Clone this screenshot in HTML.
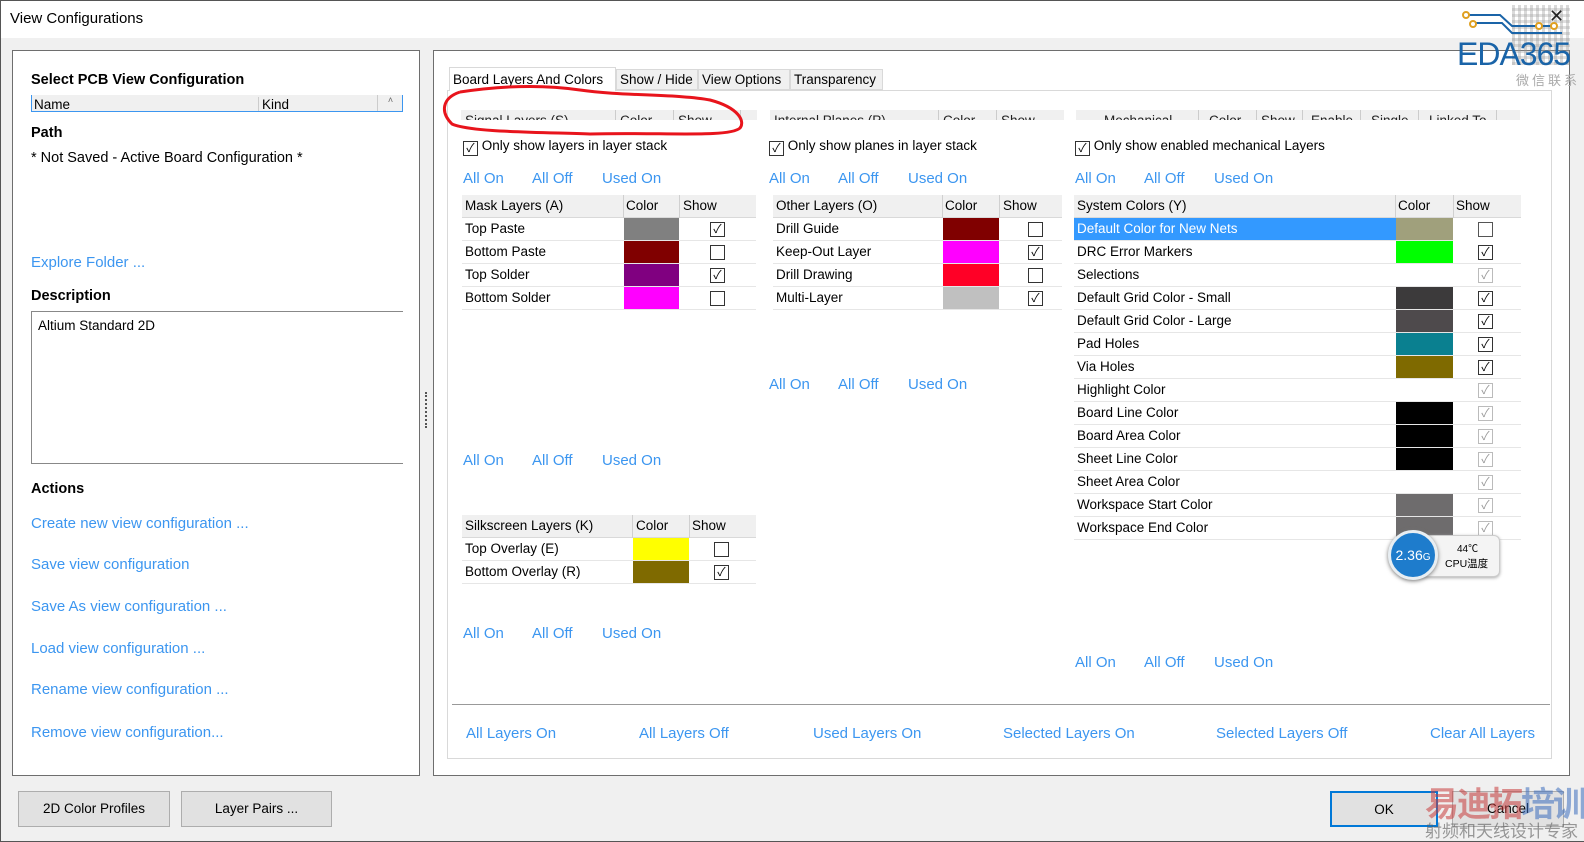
<!DOCTYPE html>
<html><head><meta charset="utf-8"><style>
*{box-sizing:border-box;margin:0;padding:0}
body{width:1584px;height:842px;background:#f0f0f0;font-family:"Liberation Sans","Noto Sans CJK SC",sans-serif;font-size:13.5px;color:#000;position:relative;overflow:hidden}
.a{position:absolute;white-space:nowrap}
.lk{position:absolute;color:#3c96f0;font-size:15px;white-space:nowrap}
.tb{position:absolute}
.tb .r{position:absolute;left:0;right:0;height:23px;border-bottom:1px solid #e6e6e6}
.tb .h{position:absolute;left:0;right:0;top:0;height:23px;background:#f0f0f0;border-bottom:1px solid #d9d9d9}
.tb .t{position:absolute;top:3px;left:3px}
.tb .v{position:absolute;top:0;bottom:0;border-left:1px solid #d0d0d0}
.sw{position:absolute;top:0;height:22px}
.cb{position:absolute;top:4px;width:15px;height:15px;border:1px solid #333;background:#fff;font-size:12px;line-height:13px;text-align:center;color:#000}
.cb.g{border-color:#bbb;color:#999}
.btn{position:absolute;background:#e1e1e1;border:1px solid #adadad;text-align:center;line-height:33px;font-size:13.5px}
</style></head><body>
<div class="a" style="left:0;top:0;width:1584px;height:38px;background:#fff"></div>
<div class="a" style="left:10px;top:10px;font-size:15px">View Configurations</div>
<div class="a" style="left:0;top:0;width:1584px;height:842px;border:1px solid #555;border-right:none"></div>

<!-- left panel -->
<div class="a" style="left:12px;top:50px;width:408px;height:726px;background:#fff;border:1px solid #6e6e6e"></div>
<div class="a" style="left:31px;top:72px;font-weight:bold;font-size:14.5px">Select PCB View Configuration</div>
<div class="a" style="left:31px;top:95px;width:372px;height:17px;background:#f0f0f0;border:1px solid #3c96f0;border-top:none;overflow:hidden"><span class="a" style="left:2px;top:2px">Name</span><span class="a" style="left:226px;top:2px;border-left:1px solid #ccc;padding-left:3px">Kind</span><span class="a" style="left:345px;top:0;border-left:1px solid #ccc;width:26px;height:17px;font-size:9px;text-align:center;color:#666">˄</span></div>
<div class="a" style="left:31px;top:125px;font-weight:bold;font-size:14.5px">Path</div>
<div class="a" style="left:31px;top:150px;font-size:14.5px">* Not Saved - Active Board Configuration *</div>
<div class="lk" style="left:31px;top:254px">Explore Folder ...</div>
<div class="a" style="left:31px;top:288px;font-weight:bold;font-size:14.5px">Description</div>
<div class="a" style="left:31px;top:311px;width:372px;height:153px;border-top:1px solid #888;border-left:1px solid #888;border-bottom:1px solid #888"></div>
<div class="a" style="left:38px;top:318px">Altium Standard 2D</div>
<div class="a" style="left:31px;top:481px;font-weight:bold;font-size:14.5px">Actions</div>
<div class="lk" style="left:31px;top:515px">Create new view configuration ...</div>
<div class="lk" style="left:31px;top:556px">Save view configuration</div>
<div class="lk" style="left:31px;top:598px">Save As view configuration ...</div>
<div class="lk" style="left:31px;top:640px">Load view configuration ...</div>
<div class="lk" style="left:31px;top:681px">Rename view configuration ...</div>
<div class="lk" style="left:31px;top:724px">Remove view configuration...</div>
<div class="a" style="left:425px;top:392px;width:2px;height:36px;border-left:2px dotted #555"></div>

<!-- right panel -->
<div class="a" style="left:433px;top:50px;width:1137px;height:726px;background:#fff;border:1px solid #6e6e6e"></div>
<div class="a" style="left:447px;top:90px;width:1105px;height:669px;border:1px solid #d9d9d9"></div>
<div class="a" style="left:449px;top:67px;width:167px;height:24px;background:#fff;border:1px solid #d9d9d9;border-bottom:none;padding:4px 3px">Board Layers And Colors</div>
<div class="a" style="left:616px;top:69px;width:82px;height:21px;background:#f0f0f0;border:1px solid #d9d9d9;padding:2px 3px">Show / Hide</div>
<div class="a" style="left:698px;top:69px;width:92px;height:21px;background:#f0f0f0;border:1px solid #d9d9d9;padding:2px 3px">View Options</div>
<div class="a" style="left:790px;top:69px;width:93px;height:21px;background:#f0f0f0;border:1px solid #d9d9d9;padding:2px 3px">Transparency</div>

<!-- clipped headers -->
<div class="a" style="left:461px;top:110px;width:296px;height:10px;background:#f0f0f0;overflow:hidden;color:#222"><span class="a" style="left:4px;top:3px">Signal Layers (S)</span><span class="a" style="left:154px;top:0;height:10px;border-left:1px solid #ccc;padding:3px 4px">Color</span><span class="a" style="left:212px;top:0;height:10px;border-left:1px solid #ccc;padding:3px 4px">Show</span><span class="a" style="left:279px;top:0;height:10px;border-left:1px solid #ccc"></span></div>
<div class="a" style="left:770px;top:110px;width:294px;height:10px;background:#f0f0f0;overflow:hidden;color:#222"><span class="a" style="left:4px;top:3px">Internal Planes (P)</span><span class="a" style="left:168px;top:0;height:10px;border-left:1px solid #ccc;padding:3px 4px">Color</span><span class="a" style="left:226px;top:0;height:10px;border-left:1px solid #ccc;padding:3px 4px">Show</span></div>
<div class="a" style="left:1076px;top:110px;width:444px;height:10px;background:#f0f0f0;overflow:hidden;color:#222"><span class="a" style="left:28px;top:3px">Mechanical</span><span class="a" style="left:122px;top:0;height:10px;border-left:1px solid #ccc;padding:3px 10px">Color</span><span class="a" style="left:180px;top:0;height:10px;border-left:1px solid #ccc;padding:3px 4px">Show</span><span class="a" style="left:226px;top:0;height:10px;border-left:1px solid #ccc;padding:3px 8px">Enable</span><span class="a" style="left:284px;top:0;height:10px;border-left:1px solid #ccc;padding:3px 10px">Single</span><span class="a" style="left:342px;top:0;height:10px;border-left:1px solid #ccc;padding:3px 10px">Linked To</span><span class="a" style="left:420px;top:0;height:10px;border-left:1px solid #ccc"></span></div>

<!-- red ellipse annotation -->
<svg class="a" style="left:440px;top:82px" width="320" height="60"><path d="M20 10 C60 4 100 2 140 8 C180 14 240 12 270 18 C300 26 305 40 300 46 C290 56 220 50 150 52 C90 50 30 50 12 42 C0 30 2 16 20 10" fill="none" stroke="#e8141c" stroke-width="3"/></svg>

<!-- checkboxes -->
<div class="a" style="left:463px;top:138px"><span class="cb" style="position:relative;display:inline-block;top:2px;left:0">✓</span> Only show layers in layer stack</div>
<div class="a" style="left:769px;top:138px"><span class="cb" style="position:relative;display:inline-block;top:2px;left:0">✓</span> Only show planes in layer stack</div>
<div class="a" style="left:1075px;top:138px"><span class="cb" style="position:relative;display:inline-block;top:2px;left:0">✓</span> Only show enabled mechanical Layers</div>

<div class="lk" style="left:463px;top:170px">All On</div><div class="lk" style="left:532px;top:170px">All Off</div><div class="lk" style="left:602px;top:170px">Used On</div>
<div class="lk" style="left:769px;top:170px">All On</div><div class="lk" style="left:838px;top:170px">All Off</div><div class="lk" style="left:908px;top:170px">Used On</div>
<div class="lk" style="left:1075px;top:170px">All On</div><div class="lk" style="left:1144px;top:170px">All Off</div><div class="lk" style="left:1214px;top:170px">Used On</div>

<!-- Mask table -->
<div class="tb" style="left:462px;top:195px;width:294px;height:115px">
<div class="h"><span class="t">Mask Layers (A)</span><span class="t" style="left:164px">Color</span><span class="t" style="left:221px">Show</span></div>
<div class="v" style="left:161px;height:23px"></div><div class="v" style="left:217px;height:23px"></div>
<div class="r" style="top:23px"><span class="t">Top Paste</span><div class="sw" style="left:162px;width:55px;background:#808080"></div><div class="cb" style="left:248px">✓</div></div>
<div class="r" style="top:46px"><span class="t">Bottom Paste</span><div class="sw" style="left:162px;width:55px;background:#800000"></div><div class="cb" style="left:248px"></div></div>
<div class="r" style="top:69px"><span class="t">Top Solder</span><div class="sw" style="left:162px;width:55px;background:#800080"></div><div class="cb" style="left:248px">✓</div></div>
<div class="r" style="top:92px"><span class="t">Bottom Solder</span><div class="sw" style="left:162px;width:55px;background:#ff00ff"></div><div class="cb" style="left:248px"></div></div>
</div>

<!-- Other table -->
<div class="tb" style="left:773px;top:195px;width:289px;height:115px">
<div class="h"><span class="t">Other Layers (O)</span><span class="t" style="left:172px">Color</span><span class="t" style="left:230px">Show</span></div>
<div class="v" style="left:169px;height:23px"></div><div class="v" style="left:226px;height:23px"></div>
<div class="r" style="top:23px"><span class="t">Drill Guide</span><div class="sw" style="left:170px;width:56px;background:#800000"></div><div class="cb" style="left:255px"></div></div>
<div class="r" style="top:46px"><span class="t">Keep-Out Layer</span><div class="sw" style="left:170px;width:56px;background:#ff00ff"></div><div class="cb" style="left:255px">✓</div></div>
<div class="r" style="top:69px"><span class="t">Drill Drawing</span><div class="sw" style="left:170px;width:56px;background:#ff0026"></div><div class="cb" style="left:255px"></div></div>
<div class="r" style="top:92px"><span class="t">Multi-Layer</span><div class="sw" style="left:170px;width:56px;background:#c0c0c0"></div><div class="cb" style="left:255px">✓</div></div>
</div>

<!-- System table -->
<div class="tb" style="left:1074px;top:195px;width:447px;height:345px">
<div class="h"><span class="t">System Colors (Y)</span><span class="t" style="left:324px">Color</span><span class="t" style="left:382px">Show</span></div>
<div class="v" style="left:321px;height:23px"></div><div class="v" style="left:379px;height:23px"></div>
<div class="r" style="top:23px;background:#3399ff;color:#fff"><span class="t">Default Color for New Nets</span><div class="sw" style="left:322px;width:57px;background:#a0a07c"></div><div class="a" style="left:379px;top:0;width:68px;height:23px;background:#fff"></div><div class="cb" style="left:404px;border-color:#555"></div></div>
<div class="r" style="top:46px"><span class="t">DRC Error Markers</span><div class="sw" style="left:322px;width:57px;background:#00ff00"></div><div class="cb" style="left:404px">✓</div></div>
<div class="r" style="top:69px"><span class="t">Selections</span><div class="cb g" style="left:404px">✓</div></div>
<div class="r" style="top:92px"><span class="t">Default Grid Color - Small</span><div class="sw" style="left:322px;width:57px;background:#3c3a3b"></div><div class="cb" style="left:404px">✓</div></div>
<div class="r" style="top:115px"><span class="t">Default Grid Color - Large</span><div class="sw" style="left:322px;width:57px;background:#4e4a4c"></div><div class="cb" style="left:404px">✓</div></div>
<div class="r" style="top:138px"><span class="t">Pad Holes</span><div class="sw" style="left:322px;width:57px;background:#0a8090"></div><div class="cb" style="left:404px">✓</div></div>
<div class="r" style="top:161px"><span class="t">Via Holes</span><div class="sw" style="left:322px;width:57px;background:#7f6a00"></div><div class="cb" style="left:404px">✓</div></div>
<div class="r" style="top:184px"><span class="t">Highlight Color</span><div class="cb g" style="left:404px">✓</div></div>
<div class="r" style="top:207px"><span class="t">Board Line Color</span><div class="sw" style="left:322px;width:57px;background:#000"></div><div class="cb g" style="left:404px">✓</div></div>
<div class="r" style="top:230px"><span class="t">Board Area Color</span><div class="sw" style="left:322px;width:57px;background:#000"></div><div class="cb g" style="left:404px">✓</div></div>
<div class="r" style="top:253px"><span class="t">Sheet Line Color</span><div class="sw" style="left:322px;width:57px;background:#000"></div><div class="cb g" style="left:404px">✓</div></div>
<div class="r" style="top:276px"><span class="t">Sheet Area Color</span><div class="cb g" style="left:404px">✓</div></div>
<div class="r" style="top:299px"><span class="t">Workspace Start Color</span><div class="sw" style="left:322px;width:57px;background:#6e6c6d"></div><div class="cb g" style="left:404px">✓</div></div>
<div class="r" style="top:322px"><span class="t">Workspace End Color</span><div class="sw" style="left:322px;width:57px;background:#6e6c6d"></div><div class="cb g" style="left:404px">✓</div></div>
</div>

<div class="lk" style="left:769px;top:376px">All On</div><div class="lk" style="left:838px;top:376px">All Off</div><div class="lk" style="left:908px;top:376px">Used On</div>
<div class="lk" style="left:463px;top:452px">All On</div><div class="lk" style="left:532px;top:452px">All Off</div><div class="lk" style="left:602px;top:452px">Used On</div>

<!-- Silkscreen -->
<div class="tb" style="left:462px;top:515px;width:294px;height:69px">
<div class="h"><span class="t">Silkscreen Layers (K)</span><span class="t" style="left:174px">Color</span><span class="t" style="left:230px">Show</span></div>
<div class="v" style="left:170px;height:23px"></div><div class="v" style="left:227px;height:23px"></div>
<div class="r" style="top:23px"><span class="t">Top Overlay (E)</span><div class="sw" style="left:171px;width:56px;background:#ffff00"></div><div class="cb" style="left:252px"></div></div>
<div class="r" style="top:46px"><span class="t">Bottom Overlay (R)</span><div class="sw" style="left:171px;width:56px;background:#7f6a00"></div><div class="cb" style="left:252px">✓</div></div>
</div>

<div class="lk" style="left:463px;top:625px">All On</div><div class="lk" style="left:532px;top:625px">All Off</div><div class="lk" style="left:602px;top:625px">Used On</div>
<div class="lk" style="left:1075px;top:654px">All On</div><div class="lk" style="left:1144px;top:654px">All Off</div><div class="lk" style="left:1214px;top:654px">Used On</div>

<div class="a" style="left:452px;top:704px;width:1098px;height:1px;background:#999"></div>
<div class="lk" style="left:466px;top:725px">All Layers On</div>
<div class="lk" style="left:639px;top:725px">All Layers Off</div>
<div class="lk" style="left:813px;top:725px">Used Layers On</div>
<div class="lk" style="left:1003px;top:725px">Selected Layers On</div>
<div class="lk" style="left:1216px;top:725px">Selected Layers Off</div>
<div class="lk" style="left:1430px;top:725px">Clear All Layers</div>

<!-- CPU widget -->
<div class="a" style="left:1400px;top:535px;width:100px;height:42px;background:#f4f4f4;border:1px solid #ccc;border-radius:6px;box-shadow:0 1px 3px #aaa"></div>
<div class="a" style="left:1457px;top:540px;font-size:10px">44℃</div>
<div class="a" style="left:1445px;top:556px;font-size:10.5px">CPU温度</div>
<div class="a" style="left:1388px;top:530px;width:50px;height:50px;border-radius:50%;background:#1e7ccc;border:3px solid #e8eef2;box-shadow:0 1px 4px #777;color:#fff;font-size:14px;text-align:center;line-height:44px">2.36<span style="font-size:10px">G</span></div>

<!-- buttons -->
<div class="btn" style="left:18px;top:791px;width:152px;height:36px">2D Color Profiles</div>
<div class="btn" style="left:181px;top:791px;width:151px;height:36px">Layer Pairs ...</div>
<div class="btn" style="left:1330px;top:791px;width:108px;height:36px;border:2px solid #0078d7">OK</div>
<div class="btn" style="left:1452px;top:791px;width:112px;height:36px">Cancel</div>

<!-- watermark -->
<div class="a" style="left:1425px;top:777px;font-size:34px;font-weight:bold;color:rgba(200,60,60,.55);letter-spacing:-2px">易迪拓<span style="color:rgba(60,110,190,.55)">培训</span></div>
<div class="a" style="left:1425px;top:817px;font-size:17px;color:rgba(90,90,90,.6)">射频和天线设计专家</div>

<!-- EDA365 logo -->
<div class="a" style="left:1512px;top:5px;width:58px;height:60px;background:repeating-linear-gradient(90deg,rgba(150,150,150,.35) 0 3px,transparent 3px 6px),repeating-linear-gradient(0deg,rgba(150,150,150,.3) 0 3px,transparent 3px 6px)"></div>
<svg class="a" style="left:1462px;top:8px" width="110" height="30"><path d="M4 7 H38 L50 18 H92 M11 15 H40 L50 25 H100" fill="none" stroke="#1a64a8" stroke-width="2"/><circle cx="4" cy="7" r="3" fill="#fff" stroke="#e0a020" stroke-width="2"/><circle cx="11" cy="16" r="3" fill="#fff" stroke="#e0a020" stroke-width="2"/><circle cx="77" cy="18" r="3" fill="#fff" stroke="#e0a020" stroke-width="2"/><circle cx="92" cy="18" r="3" fill="#fff" stroke="#e0a020" stroke-width="2"/></svg>
<div class="a" style="left:1457px;top:36px;font-size:32px;color:#1a64a8;letter-spacing:-1px">EDA365</div>
<div class="a" style="left:1516px;top:70px;font-size:13px;color:#aaa;letter-spacing:3px">微信联系</div>
<div class="a" style="left:1549px;top:6px;font-size:18px;color:#222">✕</div>
</body></html>
